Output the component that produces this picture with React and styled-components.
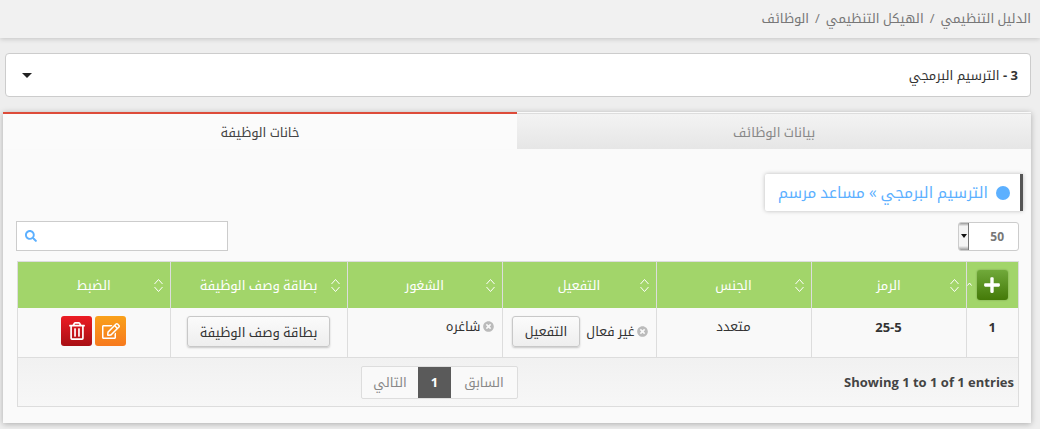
import React from 'react';
import styled, { createGlobalStyle } from 'styled-components';
import { FaPlus, FaSearch, FaRegTrashAlt, FaRegEdit, FaTimesCircle } from 'react-icons/fa';

const Global = createGlobalStyle`
  html, body { margin: 0; padding: 0; height: 100%; }
  body {
    width: 1040px;
    height: 429px;
    overflow: hidden;
    background: #eeeeee;
    font-family: "Open Sans", "Noto Kufi Arabic", "DejaVu Sans", sans-serif;
    font-size: 13px;
    color: #333;
  }
`;

const Page = styled.div`
  direction: rtl;
  width: 1040px;
  height: 429px;
  overflow: hidden;
`;

const Crumbs = styled.div`
  height: 38px;
  box-sizing: border-box;
  padding: 9px 9px 0 0;
  background: #f1f1f1;
  box-shadow: 0 1px 5px rgba(0, 0, 0, 0.18);
  color: #777;
  font-size: 13px;
  line-height: 19px;
  display: flex;
  gap: 6px;
`;

const Content = styled.div`
  padding: 15px 9px 0 9px;
  margin-left: -6px;
`;

const SelectBox = styled.div`
  margin-left: 2px;
  width: 1026px;
  height: 44px;
  box-sizing: border-box;
  background: #fff;
  border: 1px solid #ccc;
  border-radius: 4px;
  display: flex;
  align-items: center;
  justify-content: space-between;
  padding: 0 12px 0 16px;
  color: #333;
`;

const SelectLabel = styled.span`
  font-size: 13px;
  line-height: 20px;
  b { font-weight: 700; }
`;

const Caret = styled.span`
  width: 0;
  height: 0;
  border-left: 5px solid transparent;
  border-right: 5px solid transparent;
  border-top: 5px solid #222;
`;

const Panel = styled.div`
  width: 1028px;
  margin-top: 15px;
  background: #fafafa;
  box-shadow: 0 1px 6px rgba(0, 0, 0, 0.28);
`;

const Tabs = styled.div`
  display: flex;
  height: 37px;
`;

const Tab = styled.div`
  flex: 0 0 514px;
  box-sizing: border-box;
  height: ${(p) => (p.$active ? '37px' : '36px')};
  margin-top: ${(p) => (p.$active ? '0' : '1px')};
  border-top: ${(p) => (p.$active ? '2px solid #dd4b39' : '1px solid #ddd')};
  background: ${(p) => (p.$active ? '#fbfbfb' : 'linear-gradient(#f3f3f3, #e6e6e6)')};
  color: ${(p) => (p.$active ? '#444' : '#888')};
  text-align: center;
  font-size: 13px;
  line-height: 37px;
`;

const Body = styled.div`
  padding: 25px 12px 16px 14px;
`;

const Notice = styled.div`
  width: 258px;
  height: 37px;
  box-sizing: border-box;
  margin-right: -4px;
  background: #fff;
  border-right: 3px solid #555;
  box-shadow: 0 0 4px rgba(0, 0, 0, 0.25);
  border-radius: 2px 0 0 2px;
  display: flex;
  align-items: center;
  gap: 8px;
  padding-right: 10px;
  color: #5cb0ff;
  font-size: 15.4px;
  line-height: 20px;
  white-space: nowrap;
`;

const Dot = styled.span`
  width: 14px;
  height: 14px;
  flex: none;
  border-radius: 50%;
  background: #5cb0ff;
`;

const Controls = styled.div`
  display: flex;
  justify-content: space-between;
  align-items: center;
  margin-top: 10px;
  height: 30px;
  margin-left: -1px;
`;

const LengthBox = styled.div`
  width: 61px;
  height: 29px;
  box-sizing: border-box;
  background: #fff;
  border: 1px solid #ccc;
  border-radius: 3px;
  display: flex;
  align-items: center;
  justify-content: space-between;
  padding-right: 14px;
  color: #777;
  font-weight: 700;
  font-size: 12px;
  overflow: hidden;
`;

const Spin = styled.span`
  width: 9px;
  height: 27px;
  background: linear-gradient(#999 0, #f4f4f4 12%, #f4f4f4 85%, #999 100%);
  border-right: 1px solid #777;
  display: flex;
  align-items: center;
  justify-content: center;
`;

const SmallCaret = styled(Caret)`
  border-left-width: 3px;
  border-right-width: 3px;
  border-top-width: 4px;
  border-top-color: #111;
`;

const Search = styled.div`
  width: 212px;
  height: 30px;
  box-sizing: border-box;
  background: #fff;
  border: 1px solid #ccc;
  display: flex;
  align-items: center;
  justify-content: flex-end;
  padding-left: 8px;
  color: #5cb0ff;
  font-size: 12px;
`;

const Frame = styled.div`
  margin-top: 10px;
  width: 1002px;
  border: 1px solid #ddd;
  box-sizing: border-box;
`;

const Table = styled.table`
  width: 100%;
  border-collapse: collapse;
  table-layout: fixed;
`;

const Th = styled.th`
  position: relative;
  height: 46px;
  box-sizing: border-box;
  padding: 0;
  background: #a2d56a;
  color: #fff;
  font-weight: 400;
  font-size: 13px;
  line-height: 20px;
  text-align: center;
  border-left: 1px solid #ddd;
  &:last-child { border-left: none; }
`;

const Sort = styled.svg`
  position: absolute;
  right: 6px;
  top: 16px;
  width: 11px;
  height: 15px;
`;

const CornerSort = styled.svg`
  position: absolute;
  left: 0;
  top: 20px;
  width: 5px;
  height: 4px;
`;

const Td = styled.td`
  height: 49px;
  box-sizing: border-box;
  padding: ${(p) => (p.$pad || 8)}px 0 0;
  background: #f9f9f9;
  vertical-align: top;
  text-align: center;
  font-size: 13px;
  line-height: 20px;
  color: #333;
  font-weight: ${(p) => (p.$bold ? 700 : 400)};
  border-left: 1px solid #ddd;
  &:last-child { border-left: none; }
`;

const AddButton = styled.span`
  display: inline-flex;
  width: 31px;
  height: 30px;
  border-radius: 3px;
  align-items: center;
  justify-content: center;
  vertical-align: middle;
  color: #fff;
  font-size: 18px;
  background: linear-gradient(#70a93a, #447a08);
  box-shadow: 0 0 2px rgba(0, 0, 0, 0.3);
`;

const Plain = styled.span`
  display: inline-flex;
  align-items: center;
  justify-content: center;
  height: 31px;
  box-sizing: border-box;
  padding: 0 12px;
  background: linear-gradient(#fbfbfb, #eee);
  border: 1px solid #c8c8c8;
  border-radius: 3px;
  color: #333;
  font-size: 13px;
  white-space: nowrap;
  box-shadow: 0 1px 2px rgba(0, 0, 0, 0.2);
`;

const Status = styled.div`
  display: flex;
  align-items: ${(p) => (p.$center ? 'center' : 'flex-start')};
  gap: 2px;
  padding: 0 8px 0 0;
  font-size: 13px;
  line-height: 19px;
  white-space: nowrap;
  svg { color: #bbb; font-size: 11px; flex: none; margin-top: ${(p) => (p.$center ? 0 : 4)}px; }
`;

const ActivateButton = styled(Plain)`
  margin-right: 4px;
`;

const Actions = styled.div`
  display: flex;
  justify-content: center;
  gap: 3px;
`;

const IconButton = styled.span`
  width: 31px;
  height: 30px;
  border-radius: 3px;
  color: #fff;
  font-size: 18px;
  display: flex;
  align-items: center;
  justify-content: center;
  background: ${(p) => (p.$tone === 'red' ? 'linear-gradient(#ec1c24, #a80f14)' : 'linear-gradient(#f9a11b, #f7791d)')};
`;

const Footer = styled.div`
  height: 49px;
  box-sizing: border-box;
  background: linear-gradient(#f1f1f1, #f7f7f7);
  border-top: 1px solid #ddd;
  display: flex;
  align-items: center;
  justify-content: space-between;
  padding: 0 4px 0 343px;
  direction: ltr;
`;

const Info = styled.span`
  font-weight: 700;
  font-size: 13px;
  color: #444;
`;

const Pager = styled.div`
  direction: rtl;
  display: flex;
  height: 33px;
  border: 1px solid #ddd;
  border-radius: 2px;
  box-sizing: border-box;
  background: #f9f9f9;
`;

const PageItem = styled.span`
  display: flex;
  align-items: center;
  justify-content: center;
  width: ${(p) => p.$w}px;
  color: ${(p) => (p.$on ? '#fff' : '#888')};
  background: ${(p) => (p.$on ? '#5a5a5a' : 'transparent')};
  font-weight: ${(p) => (p.$on ? 700 : 400)};
  font-size: 13px;
`;

const SortIcon = () => (
  <Sort viewBox="0 0 11 15" fill="none" stroke="#fff" strokeWidth="1">
    <path d="M1.5 6 5.5 1.5 9.5 6M1.5 9 5.5 13.5 9.5 9" />
  </Sort>
);

export default function App() {
  return (
    <>
      <Global />
      <Page>
        <Crumbs>
          <span>الدليل التنظيمي</span>
          <span>/</span>
          <span>الهيكل التنظيمي</span>
          <span>/</span>
          <span>الوظائف</span>
        </Crumbs>
        <Content>
          <SelectBox>
            <SelectLabel><b>3 -</b> الترسيم البرمجي</SelectLabel>
            <Caret />
          </SelectBox>
          <Panel>
            <Tabs>
              <Tab>بيانات الوظائف</Tab>
              <Tab $active>خانات الوظيفة</Tab>
            </Tabs>
            <Body>
              <Notice>
                <Dot />
                <span>الترسيم البرمجي » مساعد مرسم</span>
              </Notice>
              <Controls>
                <LengthBox>
                  <span>50</span>
                  <Spin><SmallCaret /></Spin>
                </LengthBox>
                <Search><FaSearch /></Search>
              </Controls>
              <Frame>
                <Table>
                  <colgroup>
                    <col style={{ width: 52 }} />
                    <col style={{ width: 155 }} />
                    <col style={{ width: 155 }} />
                    <col style={{ width: 154 }} />
                    <col style={{ width: 155 }} />
                    <col style={{ width: 177 }} />
                    <col />
                  </colgroup>
                  <thead>
                    <tr>
                      <Th>
                        <AddButton><FaPlus /></AddButton>
                        <CornerSort viewBox="0 0 5 4" fill="none" stroke="#fff" strokeWidth="1">
                          <path d="M.5 3.5 2.5 1 4.5 3.5" />
                        </CornerSort>
                      </Th>
                      <Th>الرمز<SortIcon /></Th>
                      <Th>الجنس<SortIcon /></Th>
                      <Th>التفعيل<SortIcon /></Th>
                      <Th>الشغور<SortIcon /></Th>
                      <Th>بطاقة وصف الوظيفة<SortIcon /></Th>
                      <Th>الضبط<SortIcon /></Th>
                    </tr>
                  </thead>
                  <tbody>
                    <tr>
                      <Td $bold $pad={9}>1</Td>
                      <Td $bold $pad={9}>25-5</Td>
                      <Td>متعدد</Td>
                      <Td>
                        <Status $center><FaTimesCircle /><span>غير فعال</span><ActivateButton>التفعيل</ActivateButton></Status>
                      </Td>
                      <Td $pad={9}><Status><FaTimesCircle /><span>شاغره</span></Status></Td>
                      <Td><Plain>بطاقة وصف الوظيفة</Plain></Td>
                      <Td>
                        <Actions>
                          <IconButton><FaRegEdit /></IconButton>
                          <IconButton $tone="red"><FaRegTrashAlt /></IconButton>
                        </Actions>
                      </Td>
                    </tr>
                  </tbody>
                </Table>
                <Footer>
                  <Pager>
                    <PageItem $w={66}>السابق</PageItem>
                    <PageItem $w={33} $on>1</PageItem>
                    <PageItem $w={56}>التالي</PageItem>
                  </Pager>
                  <Info>Showing 1 to 1 of 1 entries</Info>
                </Footer>
              </Frame>
            </Body>
          </Panel>
        </Content>
      </Page>
    </>
  );
}
